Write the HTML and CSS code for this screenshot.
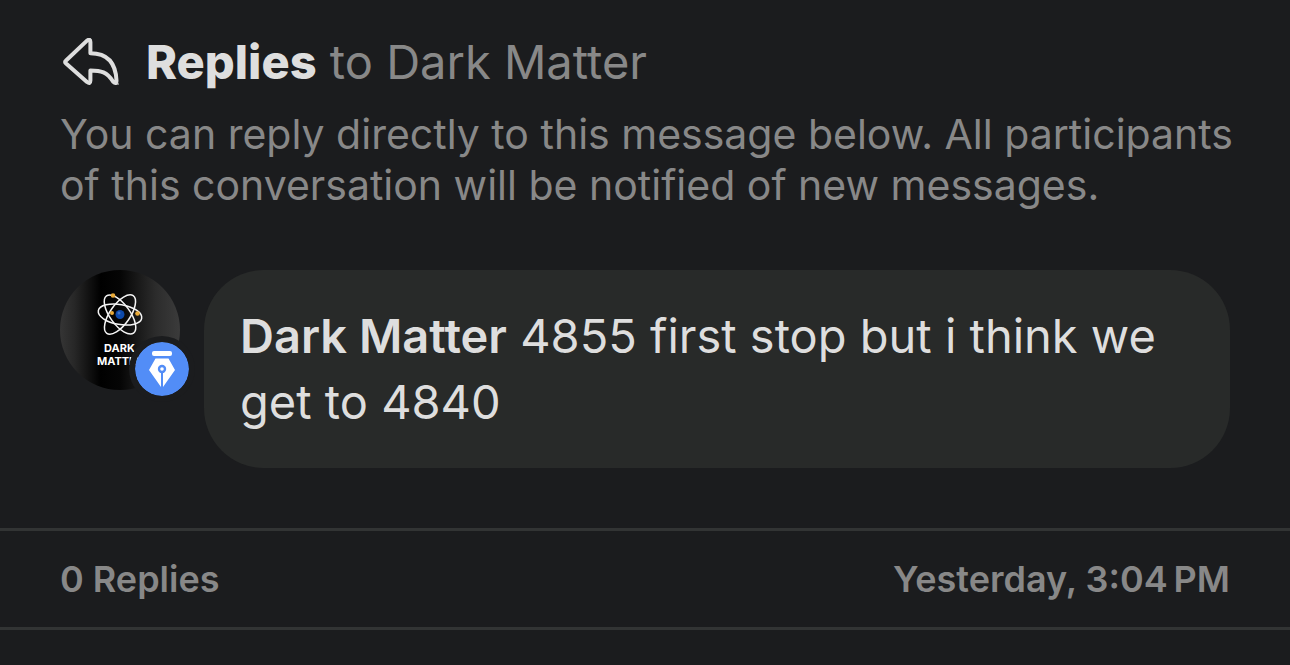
FILE: index.html
```
<!DOCTYPE html>
<html lang="en">
<head>
<meta charset="utf-8">
<meta name="viewport" content="width=device-width, initial-scale=1">
<title>Replies to Dark Matter</title>
<link rel="stylesheet" href="styles.css">
</head>
<body>
<main>
  <header class="intro">
    <div class="heading">
      <svg class="reply-icon" viewBox="-3 0 60 48" aria-hidden="true">
        <path d="M2.800 22.800 24 2.600Q27.400 .2 27.400 4V15.300C42 15.300 52.500 22 53.500 42.500Q53.500 47 50 43.500C44 34 38 32.500 27.400 32.500V42.500Q27.400 46.500 24 44L2.800 25.200Q1.400 24 2.800 22.800Z"/>
        <path class="tail" d="M52 46H56"/>
      </svg>
      <h1 class="title"><strong>Replies</strong> to Dark Matter</h1>
    </div>
    <p class="description">You can reply directly to this message below. All participants of this conversation will be notified of new messages.</p>
  </header>
  <article class="message">
    <div class="avatar">
      <svg class="portrait" viewBox="0 0 120 120" role="img" aria-label="Dark Matter">
        <defs>
          <linearGradient id="shade">
            <stop offset="0" stop-color="#353535"/>
            <stop offset=".12" stop-color="#272727"/>
            <stop offset=".34" stop-color="#000"/>
            <stop offset=".5" stop-color="#050505"/>
            <stop offset=".8" stop-color="#2c2c2c"/>
            <stop offset="1" stop-color="#3b3b3b"/>
          </linearGradient>
        </defs>
        <circle cx="60" cy="60" r="60" fill="url(#shade)"/>
        <g class="orbits">
          <ellipse cx="60" cy="44.500" rx="22" ry="10" transform="rotate(10 60 44.5)"/>
          <ellipse cx="60" cy="44.500" rx="23" ry="10" transform="rotate(54 60 44.5)"/>
          <ellipse cx="60" cy="44.500" rx="23" ry="10" transform="rotate(-55 60 44.5)"/>
        </g>
        <circle cx="60" cy="44.500" r="4.500" fill="#0d4aac"/>
        <circle cx="59" cy="43" r="1.500" fill="#3c72c6"/>
        <g fill="#e9aa38">
          <circle cx="53" cy="25.500" r="2.300"/>
          <circle cx="52" cy="43" r="2"/>
          <circle cx="77.500" cy="43.500" r="2.300"/>
        </g>
        <text class="logo-text" x="59.500" y="82">DARK</text>
        <text class="logo-text" x="60" y="95">MATTER</text>
      </svg>
      <svg class="badge" viewBox="0 0 54 54" aria-hidden="true">
        <circle cx="27" cy="27" r="27" fill="#528df7"/>
        <rect x="17" y="9" width="20" height="5" rx="2" fill="#fff"/>
        <path d="M20.500 16.500H33.500L40 28 28 45V30H26V45L14 28Z" fill="#fff"/>
        <circle cx="27" cy="27" r="4.200" fill="#528df7"/>
        <circle cx="27" cy="27" r="1.800" fill="#fff"/>
      </svg>
    </div>
    <p class="bubble"><strong>Dark Matter</strong> 4855 first stop but i think we get to 4840</p>
  </article>
  <footer class="summary">
    <span>0 Replies</span>
    <time>Yesterday, 3:04&#8239;PM</time>
  </footer>
</main>
</body>
</html>
```
FILE: styles.css
```
* {
  box-sizing: border-box;
}

body {
  margin: 0;
  background: #1b1c1e;
  color: #888;
  font-family: Inter, "Liberation Sans", sans-serif;
}

.intro {
  padding: 32px 52px 0 60px;
}

.heading {
  display: flex;
  align-items: center;
  gap: 26px;
}

.reply-icon {
  flex: none;
  width: 60px;
  height: 48px;
  fill: none;
  stroke: #dedede;
  stroke-width: 4;
  stroke-linejoin: round;
}

.reply-icon .tail {
  stroke-width: 1;
}

.title {
  margin: 0;
  font-size: 47px;
  line-height: 60px;
  font-weight: 400;
}

.title strong {
  color: #dedede;
  font-weight: 800;
}

.description {
  margin: 17px 0 0;
  font-size: 41px;
  line-height: 51px;
}

.message {
  display: flex;
  align-items: flex-start;
  gap: 24px;
  padding: 59px 60px 60px;
}

.avatar {
  position: relative;
  flex: none;
  width: 120px;
  height: 120px;
}

.portrait {
  display: block;
  width: 100%;
}

.orbits {
  fill: none;
  stroke: #f4f4f4;
  stroke-width: 1.5;
}

.logo-text {
  fill: #fff;
  font-size: 11px;
  font-weight: 700;
  text-anchor: middle;
}

.badge {
  position: absolute;
  right: -9px;
  bottom: -6px;
  width: 54px;
  height: 54px;
  border-radius: 50%;
  box-shadow: 0 0 0 6px #1b1c1e;
}

.bubble {
  flex: 1;
  margin: 0;
  padding: 33px 36px;
  border-radius: 60px;
  background: #282a29;
  color: #dedede;
  font-size: 47px;
  line-height: 66px;
}

.bubble strong {
  font-weight: 600;
}

.summary {
  display: flex;
  justify-content: space-between;
  padding: 24px 60px;
  border-top: 3px solid #323434;
  border-bottom: 3px solid #323434;
  font-size: 36px;
  line-height: 48px;
  font-weight: 600;
}
```
